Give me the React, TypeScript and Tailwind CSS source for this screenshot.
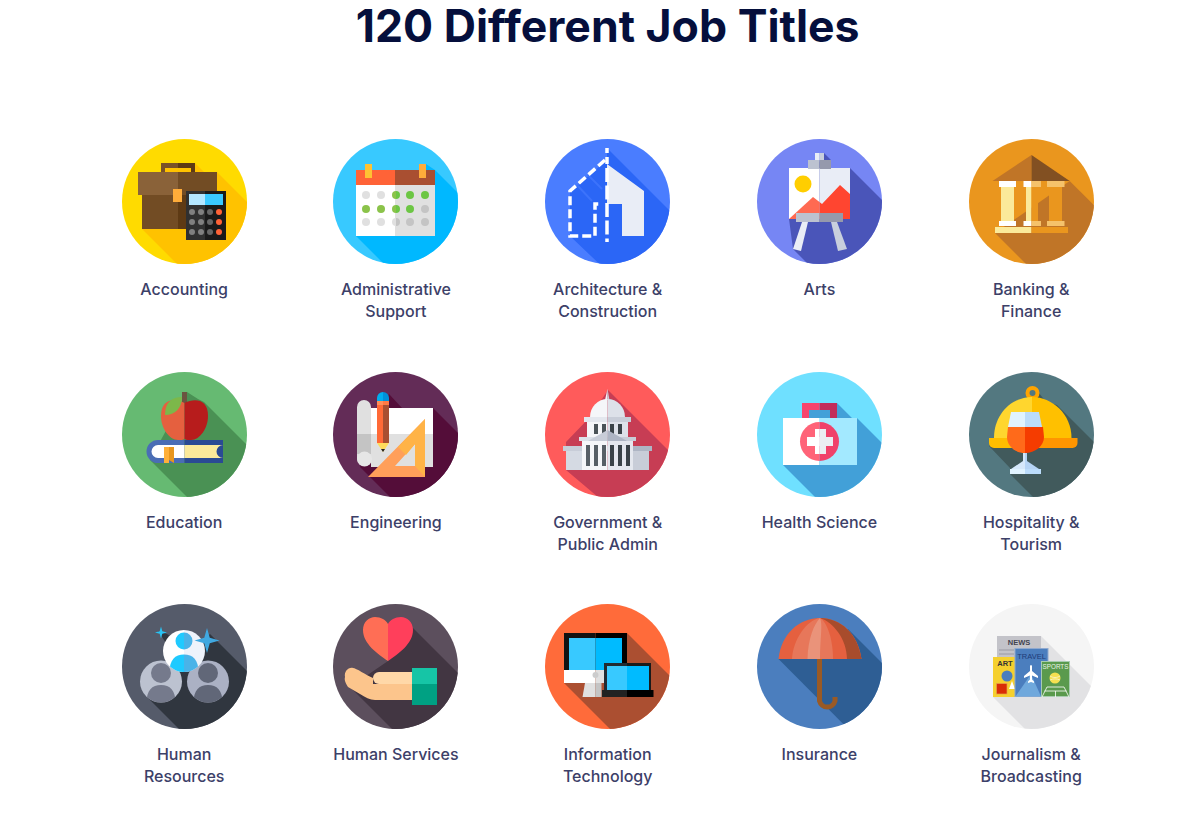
import React from 'react';

type RectProps = { x: number; y: number; w: number; h: number; f: string };

// plain rect, coordinates are pixels inside the 125px circle
const R = ({ x, y, w, h, f }: RectProps) => <rect x={x} y={y} width={w} height={h} fill={f} />;

// rect cut in two colours at x = at
const Split = ({ x, y, w, h, at, a, b }: { x: number; y: number; w: number; h: number; at: number; a: string; b: string }) => (
  <>
    <rect x={x} y={y} width={at - x} height={h} fill={a} />
    <rect x={at} y={y} width={x + w - at} height={h} fill={b} />
  </>
);

const HalfDot = ({ cx, cy, r, a, b }: { cx: number; cy: number; r: number; a: string; b: string }) => (
  <>
    <path d={`M${cx} ${cy - r}A${r} ${r} 0 0 0 ${cx} ${cy + r}Z`} fill={a} />
    <path d={`M${cx} ${cy - r}A${r} ${r} 0 0 1 ${cx} ${cy + r}Z`} fill={b} />
  </>
);

function Disc({ id, bg, shade, points, children }: { id: string; bg: string; shade: string; points: string; children: React.ReactNode }) {
  return (
    <svg viewBox="0 0 125 125" className="w-[125px] h-[125px] block">
      <clipPath id={id}>
        <circle cx="62.5" cy="62.5" r="62.5" />
      </clipPath>
      <g clipPath={`url(#${id})`}>
        <rect width="125" height="125" fill={bg} />
        <polygon points={points} fill={shade} />
        {children}
      </g>
    </svg>
  );
}

function Accounting() {
  const cols = [70, 79, 88, 97];
  const fills = ['#808080', '#808080', '#666666', '#ff6337'];
  return (
    <Disc id="acc" bg="#ffdb00" shade="#ffc200" points="73,24 82,33 95,33 195,133 120,190 20,90">
      <Split x={39} y={24} w={34} h={9} at={56} a="#7a5228" b="#5e3a14" />
      <R x={43} y={29} w={26} h={4} f="#ffc200" />
      <Split x={16} y={33} w={79} h={23} at={56} a="#8a6239" b="#724c24" />
      <Split x={20} y={56} w={75} h={34} at={56} a="#724c24" b="#5e3a14" />
      <R x={51} y={50} w={9} h={13} f="#ffac3a" />
      <Split x={64} y={52} w={40} h={49} at={83} a="#303030" b="#1a1a1a" />
      <Split x={67} y={55} w={34} h={11} at={83} a="#b3e6ff" b="#3ac9ff" />
      {[73, 83, 93].map((y) => cols.map((x, i) => <circle key={`${x}-${y}`} cx={x} cy={y} r="3" fill={fills[i]} />))}
    </Disc>
  );
}

function Admin() {
  const xs = [33, 48, 63, 77, 92];
  const rows = [
    ['#e0e0e0', '#e0e0e0', '#6cc644', '#6cc644', '#6cc644'],
    ['#8bc34a', '#8bc34a', '#6cc644', '#6cc644', '#c4c4c4'],
    ['#e0e0e0', '#e0e0e0', '#c4c4c4', '#c4c4c4', '#c4c4c4'],
  ];
  const ys = [56, 70, 83];
  return (
    <Disc id="adm" bg="#38c9ff" shade="#00b8ff" points="93,25 102,31 202,131 123,197 23,97">
      <Split x={23} y={31} w={79} h={15} at={62} a="#ff6337" b="#a94f31" />
      <Split x={23} y={46} w={79} h={51} at={62} a="#ffffff" b="#e0e0e0" />
      <R x={32} y={25} w={7} h={14} f="#ffc233" />
      <R x={86} y={25} w={7} h={14} f="#ffac3a" />
      {rows.map((row, j) =>
        row.map((c, i) =>
          i === 2 ? (
            <HalfDot key={`${i}-${j}`} cx={xs[i]} cy={ys[j]} r={4} a={j === 2 ? '#e0e0e0' : '#8bc34a'} b={c} />
          ) : (
            <circle key={`${i}-${j}`} cx={xs[i]} cy={ys[j]} r="4" fill={c} />
          ),
        ),
      )}
    </Disc>
  );
}

function Architecture() {
  return (
    <Disc id="arc" bg="#4a7dff" shade="#2b66f6" points="62,9 182,129 130,197 25,97 25,53 62,21">
      <path d="M43 36L57 50M32 46L47 62" stroke="#3c73fb" strokeWidth="2" />
      <polygon points="62,25 99,52 99,97 77,97 77,65 62,65" fill="#e9edf6" />
      <path d="M60 21L25 52V97H50V65H57" fill="none" stroke="#ffffff" strokeWidth="3.5" strokeDasharray="9 4" />
      <path d="M62 9V14M62 18V25M62 29V97M62 99.5V103" stroke="#ffffff" strokeWidth="3.5" strokeDasharray="14 3.5" />
    </Disc>
  );
}

function Arts() {
  return (
    <Disc id="art" bg="#7686f4" shade="#4a55b9" points="67,14 74,21 74,29 93,29 193,129 136,210 36,110 32,80">
      <Split x={58} y={14} w={9} h={7} at={62.5} a="#e9edf6" b="#c8cfdd" />
      <Split x={32} y={29} w={61} h={51} at={62.5} a="#ffffff" b="#e9edf6" />
      <circle cx="46" cy="45" r="8.5" fill="#ffce00" />
      <polygon points="32,80 56,58 62.5,63 62.5,80" fill="#ff6a52" />
      <polygon points="62.5,63 65,65 83,46 93,55 93,80 62.5,80" fill="#ff4530" />
      <Split x={51} y={21} w={23} h={9} at={62.5} a="#bcc2d0" b="#9599ac" />
      <Split x={39} y={74} w={47} h={9} at={62.5} a="#bcc2d0" b="#9599ac" />
      <polygon points="45,83 51,83 44,112 36,110" fill="#e9edf6" />
      <polygon points="74,83 80,83 90,110 81,112" fill="#c8cfdd" />
    </Disc>
  );
}

function Banking() {
  return (
    <Disc id="bnk" bg="#ea961e" shade="#c07527" points="100.7,42 200,141 126,194 26,94">
      <polygon points="62.5,16 62.5,42 23.5,42" fill="#c07527" />
      <polygon points="62.5,16 100.7,42 62.5,42" fill="#825022" />
      <R x={32} y={48} w={13} h={34} f="#fbea9a" />
      <R x={30} y={42} w={17} h={6} f="#ffffff" />
      <R x={30} y={82} w={17} h={5} f="#ffffff" />
      <Split x={57} y={48} w={12} h={34} at={62.5} a="#fbea9a" b="#ea961e" />
      <Split x={54.5} y={42} w={17.5} h={6} at={62.5} a="#ffffff" b="#f5c26b" />
      <Split x={54.5} y={82} w={17.5} h={5} at={62.5} a="#ffffff" b="#f5c26b" />
      <R x={80} y={48} w={13} h={34} f="#ea961e" />
      <R x={78} y={42} w={17.5} h={6} f="#f5c26b" />
      <R x={78} y={82} w={17.5} h={5} f="#f5c26b" />
      <Split x={26} y={88} w={73} h={6} at={62.5} a="#fbea9a" b="#ea961e" />
    </Disc>
  );
}

function Education() {
  return (
    <Disc id="edu" bg="#66ba72" shade="#4a9154" points="65,20 76,27 82,30 182,130 128,188 28,88">
      <path d="M101 68H36a11.5 11.5 0 0 0 0 23H62.5V68Z" fill="#4a6db5" />
      <R x={62.5} y={68} w={38.5} h={23} f="#2a4a94" />
      <path d="M62.5 73H36a6.5 6.5 0 0 0 0 13H62.5Z" fill="#ffffff" />
      <path d="M62.5 73H101a6.5 6.5 0 0 0 0 13H62.5Z" fill="#fbe99a" />
      <R x={42} y={75} w={5} h={16} f="#ffb03a" />
      <polygon points="47,75 52,75 52,91 47,88" fill="#e8961e" />
      <R x={60} y={20} w={5} h={11} f="#6b5440" />
      <path d="M62.5 31C52 26 39 27 39 44C39 56 47 68 56 68C59 68 61 68 62.5 67Z" fill="#e5603f" />
      <path d="M62.5 31C73 26 86 27 86 44C86 56 78 68 69 68C66 68 64 68 62.5 67Z" fill="#b71c1c" />
      <path d="M43 43C43 30 50 25 60 25C60 36 53 43 43 43Z" fill="#7cb84a" />
    </Disc>
  );
}

function Engineering() {
  return (
    <Disc id="eng" bg="#632c57" shade="#540d39" points="56,22 69,36 100,36 200,136 127,195 27,95">
      <R x={38} y={36} w={62} h={26} f="#ffffff" />
      <R x={38} y={62} w={62} h={33} f="#e0e0e0" />
      <rect x="24" y="28" width="14" height="65" rx="7" fill="#e0e0e0" />
      <R x={24} y={62} w={14} h={20} f="#c4c4c4" />
      <circle cx="31.5" cy="87" r="7.5" fill="#e6e6e6" />
      <path d="M44 29V26a6 6 0 0 1 6-6V29Z" fill="#00aeef" />
      <path d="M56 29V26a6 6 0 0 0-6-6V29Z" fill="#0090d9" />
      <Split x={44} y={29} w={12} h={4} at={50} a="#ff8f5a" b="#ff7a45" />
      <Split x={44} y={33} w={12} h={38} at={50} a="#ff6a37" b="#a94f31" />
      <polygon points="44,71 56,71 50,80" fill="#ffdc5c" />
      <polygon points="48,77 52,77 50,80" fill="#222222" />
      <path d="M92 47V105H35ZM82 72L62 94H82Z" fill="#ff9f5a" fillRule="evenodd" />
      <polygon points="92,47 65,75 73,83 82,72 82,94 92,105" fill="#ffb347" />
    </Disc>
  );
}

function Government() {
  const top = [49, 57, 65, 73];
  const low = [41, 49, 57, 65, 73, 81];
  return (
    <Disc id="gov" bg="#ff5b5b" shade="#c73d54" points="63,18 183,138 60,131 21,98 21,70 45,45">
      <polygon points="62.5,17 60,28 62.5,28" fill="#f5f6f9" />
      <polygon points="62.5,17 64.5,28 62.5,28" fill="#c8cdd8" />
      <path d="M45 45A17.5 18 0 0 1 62.5 27V45Z" fill="#f5f6f9" />
      <path d="M80 45A17.5 18 0 0 0 62.5 27V45Z" fill="#dde1e9" />
      <Split x={39} y={45} w={47} h={5} at={62.5} a="#e4e7ee" b="#c8cdd8" />
      <Split x={42} y={50} w={41} h={15} at={62.5} a="#f5f6f9" b="#dde1e9" />
      {top.map((x) => <R key={x} x={x} y={52} w={4} h={10} f={x < 62 ? '#4b5358' : '#3a4248'} />)}
      <Split x={18} y={74} w={89} h={5} at={62.5} a="#c8cdd8" b="#aeb5c4" />
      <R x={21} y={79} w={16} h={19} f="#d5dae3" />
      <R x={88} y={79} w={16} h={19} f="#c8cdd8" />
      <Split x={34} y={65} w={57} h={4} at={62.5} a="#dde1e9" b="#c8cdd8" />
      <polygon points="62.5,58 62.5,69 43,69" fill="#c8cdd8" />
      <polygon points="62.5,58 82,69 62.5,69" fill="#aeb5c4" />
      <Split x={37} y={69} w={51} h={29} at={62.5} a="#f5f6f9" b="#e4e7ee" />
      {low.map((x) => <R key={x} x={x} y={73} w={4} h={21} f={x < 62 ? '#575f66' : '#3a4248'} />)}
    </Disc>
  );
}

function Health() {
  return (
    <Disc id="hlt" bg="#6fe0ff" shade="#42a0d8" points="80,31 95,46 100,46 200,146 126,193 26,93">
      <Split x={45} y={31} w={35} h={15} at={62.5} a="#f7436c" b="#c22c5a" />
      <R x={52} y={38} w={21} h={8} f="#42a0d8" />
      <Split x={26} y={46} w={74} h={47} at={62.5} a="#ffffff" b="#a3e9ff" />
      <HalfDot cx={62.5} cy={69.5} r={19.5} a="#ff6378" b="#f0416a" />
      <Split x={50} y={65} w={26} h={9} at={62.5} a="#ffffff" b="#ebedf2" />
      <Split x={58} y={57} w={11} h={25} at={62.5} a="#ffffff" b="#ebedf2" />
    </Disc>
  );
}

function Hospitality() {
  return (
    <Disc id="hsp" bg="#537880" shade="#415a5c" points="70,21 77,30 88,33 188,133 141,202 41,102 41,96 20,74">
      <circle cx="63.5" cy="21" r="5" fill="none" stroke="#ffa400" strokeWidth="4" />
      <path d="M25 66C25 42 43 25 63 25V66Z" fill="#ffd62e" />
      <path d="M102.5 66C102.5 42 83 25 63 25V66Z" fill="#ffc000" />
      <path d="M20 66H63V76H25A5 5 0 0 1 20 71Z" fill="#ffbe00" />
      <path d="M108.5 66H63V76H103.5A5 5 0 0 0 108.5 71Z" fill="#ff9500" />
      <polygon points="42,40 56,40 56,55 39,55" fill="#e0f3ff" />
      <polygon points="70,40 56,40 56,55 73,55" fill="#bbdcfb" />
      <path d="M39 55H56V81C46 81 38 74 38 65Z" fill="#ff6a1a" />
      <path d="M74 55H56V81C66 81 75 74 75 65Z" fill="#f53c00" />
      <polygon points="54,81 56,81 56,97 42,97 54,89" fill="#d5e8fb" />
      <polygon points="58,81 56,81 56,97 70,97 58,89" fill="#b5d4f5" />
      <Split x={41} y={97} w={31} h={5} at={56} a="#e0f3ff" b="#bbdcfb" />
    </Disc>
  );
}

const Star = ({ cx, cy, r, f }: { cx: number; cy: number; r: number; f: string }) => {
  const k = r * 0.22;
  return (
    <path
      d={`M${cx} ${cy - r}L${cx + k} ${cy - k}L${cx + r} ${cy}L${cx + k} ${cy + k}L${cx} ${cy + r}L${cx - k} ${cy + k}L${cx - r} ${cy}L${cx - k} ${cy - k}Z`}
      fill={f}
    />
  );
};

function Person(props: { id: string; cx: number; cy: number; bg: string; bgB?: string; head: string; headB?: string; headUp: number; headR: number }) {
  const { id, cx, cy, bg, bgB, head, headB, headUp, headR } = props;
  return (
    <>
      <clipPath id={id}>
        <circle cx={cx} cy={cy} r="21" />
      </clipPath>
      <HalfDot cx={cx} cy={cy} r={21} a={bg} b={bgB || bg} />
      <HalfDot cx={cx} cy={cy - headUp} r={headR} a={head} b={headB || head} />
      <g clipPath={`url(#${id})`}>
        <path d={`M${cx} ${cy + 3.5}C${cx - 9} ${cy + 3.5} ${cx - 14.5} ${cy + 9} ${cx - 14.5} ${cy + 21}H${cx}Z`} fill={head} />
        <path d={`M${cx} ${cy + 3.5}C${cx + 9} ${cy + 3.5} ${cx + 14.5} ${cy + 9} ${cx + 14.5} ${cy + 21}H${cx}Z`} fill={headB || head} />
      </g>
    </>
  );
}

function HumanResources() {
  return (
    <Disc id="hrs" bg="#555b6a" shade="#30363f" points="88,30 188,130 124,192 25,93">
      <polygon points="36,27 45,30 60,40 50,48" fill="#30363f" />
      <Person id="hr1" cx={39} cy={77.5} bg="#bcc2d0" head="#757a8c" headUp={8.5} headR={10} />
      <Person id="hr2" cx={86} cy={77.5} bg="#abb1c4" head="#616778" headUp={8.5} headR={10} />
      <Person id="hr3" cx={62} cy={47} bg="#ffffff" bgB="#eef3fb" head="#1fcaff" headB="#4ab3e8" headUp={10} headR={8.5} />
      <Star cx={39} cy={28.5} r={6} f="#29c4f5" />
      <Star cx={85} cy={36.5} r={12.5} f="#40a8e0" />
    </Disc>
  );
}

function HumanServices() {
  return (
    <Disc id="hsv" bg="#5c4f5d" shade="#423642" points="80,24 180,124 117,183 17,83 55,57">
      <path d="M55 57C45 50 30 40 30 26C30 18 36 13 42 13C48 13 53 16 55 20Z" fill="#ff6e55" />
      <path d="M55 57C65 50 80 40 80 26C80 18 74 13 68 13C62 13 57 16 55 20Z" fill="#ff3f5b" />
      <path d="M12 73C11 68 15 63 20 64C23 64 33 71 40 74V80H79V96H42C37 96 32 93 27 90L15 83C13 80 11 76 12 73Z" fill="#fcc58c" />
      <path d="M46 68H79V80H46A6 6 0 0 1 46 68Z" fill="#ffd8a8" />
      <R x={79} y={64} w={25} h={16} f="#16c5a6" />
      <R x={79} y={80} w={25} h={21} f="#00a183" />
    </Disc>
  );
}

function InfoTech() {
  return (
    <Disc id="itc" bg="#ff6b3a" shade="#ab4f31" points="82,29 182,129 119,179 19,79">
      <Split x={19} y={29} w={63} h={37} at={50.5} a="#121212" b="#000000" />
      <Split x={24} y={34} w={53} h={32} at={50.5} a="#38c9ff" b="#00bbff" />
      <polygon points="40,79 37.5,93 50.5,93 50.5,79" fill="#e0e0e0" />
      <polygon points="50.5,79 56.5,79 56.5,93 50.5,93" fill="#c4c4c4" />
      <Split x={19} y={66} w={40} h={13} at={50.5} a="#ffffff" b="#e0e0e0" />
      <circle cx="50.5" cy="71" r="3" fill="#cccccc" />
      <Split x={59} y={59} w={47} h={27} at={82} a="#222b33" b="#1a1a1a" />
      <Split x={62} y={62} w={42} h={24} at={82} a="#38c9ff" b="#00bbff" />
      <Split x={57} y={86} w={51.5} h={7} at={82} a="#222222" b="#000000" />
    </Disc>
  );
}

function InsuranceIcon() {
  return (
    <Disc id="ins" bg="#4b7ebe" shade="#2e5e94" points="91,25 191,125 155,189 21.5,55">
      <path d="M21.5 55C24 30 42 14 63 14C84 14 101 30 104.5 55Z" fill="#e5603f" />
      <path d="M63 14C84 14 101 30 104.5 55H90C90 35 76 18 63 14Z" fill="#a84c2c" />
      <path d="M35 55C36 35 50 16 63 14C70 18 76 35 76 55Z" fill="#e7775a" />
      <path d="M50.5 55C51 35 57 20 63 14C66 20 63 35 63 55Z" fill="#ea937a" />
      <path d="M62.5 55V97A8 8 0 0 0 78 97V93" fill="none" stroke="#9a5a25" strokeWidth="5" />
    </Disc>
  );
}

function Journalism() {
  const tiny = { fontFamily: '"Liberation Sans", sans-serif', textAnchor: 'middle' as const };
  return (
    <Disc id="jrn" bg="#f5f5f5" shade="#e2e2e4" points="72,32 172,132 124,193 24,93">
      <R x={28} y={32} w={44} h={30} f="#c3c3c9" />
      <text x={50} y={41} fontSize="7.5" fontWeight="700" fill="#444450" style={tiny}>NEWS</text>
      <R x={30} y={45} w={15} h={2} f="#aeaeb6" />
      <R x={30} y={49} w={15} h={2} f="#aeaeb6" />
      <R x={24} y={53} w={22} h={40} f="#f5d02e" />
      <text x={36} y={62} fontSize="7.5" fontWeight="700" fill="#333333" style={tiny}>ART</text>
      <circle cx="38" cy="72" r="5.5" fill="#4b7ebe" />
      <rect x="27.5" y="79.5" width="10.5" height="10.5" fill="#d92d06" stroke="#e9a24a" strokeWidth="0.7" />
      <polygon points="43,77 46,85 40,85" fill="#ffffff" />
      <rect x="46" y="44.5" width="33" height="48" fill="#4b7ebe" stroke="#8fa9cf" strokeWidth="1" />
      <polygon points="62,70 72,92.5 46.5,92.5" fill="#6fa8dc" />
      <text x={62.5} y={55} fontSize="7.5" fill="#1f3c78" style={tiny}>TRAVEL</text>
      <path d="M61 62C61.5 60.5 62.5 60.5 63 62V67L69 72V74L63 71.5V75.5L65 77.5V79L62 78L59 79V77.5L61 75.5V71.5L55 74V72L61 67Z" fill="#ffffff" />
      <rect x="72.5" y="57.5" width="28" height="35" fill="#5a9a4d" stroke="#a8ccb0" strokeWidth="1" />
      <text x={86.5} y={65} fontSize="6.3" fill="#e9f2e6" style={tiny}>SPORTS</text>
      <circle cx="86" cy="74" r="5.5" fill="#f5e050" />
      <path d="M81 72C84 74 88 74 91 72M81 76C84 74.5 88 74.5 91 76" fill="none" stroke="#ffffff" strokeWidth="0.6" />
      <path d="M78 83L73 93M95 83L100 93M78 83H95M75.5 87H97.5M86.5 87V93" fill="none" stroke="#ffffff" strokeWidth="0.8" />
    </Disc>
  );
}

const titles: { lines: string[]; icon: React.ReactNode }[] = [
  { lines: ['Accounting'], icon: <Accounting /> },
  { lines: ['Administrative', 'Support'], icon: <Admin /> },
  { lines: ['Architecture &', 'Construction'], icon: <Architecture /> },
  { lines: ['Arts'], icon: <Arts /> },
  { lines: ['Banking &', 'Finance'], icon: <Banking /> },
  { lines: ['Education'], icon: <Education /> },
  { lines: ['Engineering'], icon: <Engineering /> },
  { lines: ['Government &', 'Public Admin'], icon: <Government /> },
  { lines: ['Health Science'], icon: <Health /> },
  { lines: ['Hospitality &', 'Tourism'], icon: <Hospitality /> },
  { lines: ['Human', 'Resources'], icon: <HumanResources /> },
  { lines: ['Human Services'], icon: <HumanServices /> },
  { lines: ['Information', 'Technology'], icon: <InfoTech /> },
  { lines: ['Insurance'], icon: <InsuranceIcon /> },
  { lines: ['Journalism &', 'Broadcasting'], icon: <Journalism /> },
];

export default function App() {
  return (
    <div className="min-h-[815px] bg-white font-['Inter',sans-serif]">
      <div className="w-[1058.75px] ml-[78.3px]">
        <h1 className="h-[139px] pt-[1px] text-center text-[44.6px] leading-[50px] font-bold text-[#050f3c]">
          120 Different Job Titles
        </h1>
        <div className="grid grid-cols-5 gap-y-[48.5px]">
          {titles.map((t) => (
            <div key={t.lines[0] + t.lines.length} className="h-[184px] flex flex-col items-center">
              {t.icon}
              <div className="mt-[14px] text-center text-[16px] leading-[22.4px] font-medium text-[#3c4068]">
                {t.lines.map((l) => (
                  <div key={l} className="whitespace-nowrap">{l}</div>
                ))}
              </div>
            </div>
          ))}
        </div>
      </div>
    </div>
  );
}
